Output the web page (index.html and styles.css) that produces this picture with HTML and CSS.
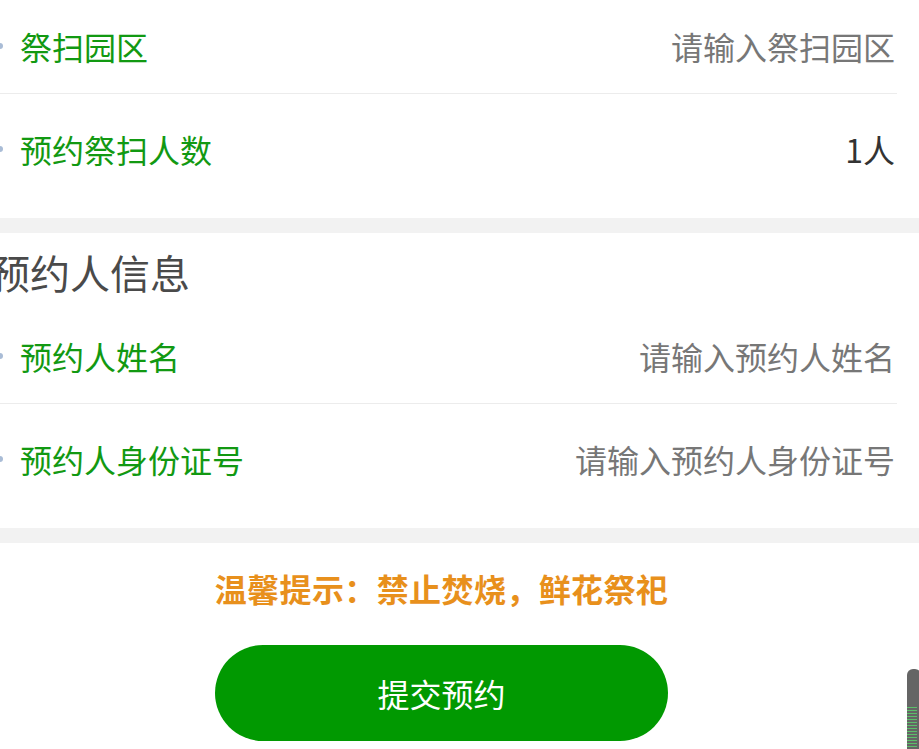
FILE: index.html
```html
<!DOCTYPE html>
<html lang="zh-CN">
<head>
<meta charset="utf-8">
<title>预约</title>
<link rel="stylesheet" href="styles.css">
</head>
<body>
<div class="page">
  <section class="card">
    <div class="row">
      <div class="label"><span class="dot"></span>祭扫园区</div>
      <div class="value placeholder">请输入祭扫园区</div>
    </div>
    <div class="row last">
      <div class="label"><span class="dot"></span>预约祭扫人数</div>
      <div class="value">1人</div>
    </div>
  </section>
  <div class="gap"></div>
  <section class="card">
    <h2 class="card-title">预约人信息</h2>
    <div class="row">
      <div class="label"><span class="dot"></span>预约人姓名</div>
      <div class="value placeholder">请输入预约人姓名</div>
    </div>
    <div class="row last">
      <div class="label"><span class="dot"></span>预约人身份证号</div>
      <div class="value placeholder">请输入预约人身份证号</div>
    </div>
  </section>
  <div class="gap"></div>
  <p class="tip">温馨提示：禁止焚烧，鲜花祭祀</p>
  <div class="actions">
    <button class="submit" type="button">提交预约</button>
  </div>
</div>
<div class="scroll-indicator"><div class="stripes"></div></div>
</body>
</html>
```
FILE: styles.css
```css
html, body {
  margin: 0;
  padding: 0;
  background: #ffffff;
  overflow: hidden;
  height: 749px;
}

body {
  font-family: "Noto Sans CJK SC", "Microsoft YaHei", "Noto Sans", sans-serif;
  position: relative;
}

.page {
  width: 955px;
  margin-left: -36px;
  margin-top: -8px;
}

.card {
  background: #ffffff;
  padding-bottom: 22px;
}

.gap {
  height: 15px;
  background: #f2f2f2;
}

.card-title {
  margin: 0;
  height: 59px;
  padding-top: 10px;
  line-height: 59px;
  padding-left: 26px;
  font-size: 40px;
  font-weight: normal;
  color: #4a4a4a;
}

.row {
  display: flex;
  justify-content: space-between;
  align-items: center;
  height: 101px;
  box-sizing: content-box;
  padding: 0 2px 0 33px;
  margin-right: 22px;
  border-bottom: 1px solid #ececec;
}

.row .label,
.row .value {
  padding-top: 7px;
}

.row.last {
  border-bottom: none;
  height: 102px;
}

.label {
  display: flex;
  align-items: center;
  font-size: 32px;
  line-height: 44px;
  color: #129912;
}

.dot {
  width: 6px;
  height: 6px;
  border-radius: 50%;
  background: #a9bcd6;
  margin-right: 17px;
  flex: none;
}

.value {
  font-size: 32px;
  line-height: 44px;
  color: #333333;
}

.value.placeholder {
  color: #777777;
}

.tip {
  margin: 0;
  padding-top: 23px;
  text-align: center;
  font-size: 32px;
  letter-spacing: 0.4px;
  line-height: 44px;
  font-weight: bold;
  color: #e8901c;
}

.actions {
  display: flex;
  justify-content: center;
  padding-top: 35px;
}

.submit {
  width: 453px;
  height: 96px;
  border: none;
  border-radius: 48px;
  background: #019901;
  color: #ffffff;
  font-family: inherit;
  font-size: 32px;
  padding: 0;
  cursor: pointer;
}

.scroll-indicator {
  position: absolute;
  left: 907px;
  top: 669px;
  width: 14px;
  height: 90px;
  background: #656565;
  border-radius: 6px 6px 0 0;
}

.stripes {
  margin-top: 38px;
  width: 10px;
  height: 50px;
  background-image: linear-gradient(to bottom, #5cbf6a 50%, #656565 50%);
  background-size: 100% 3px;
}
```
